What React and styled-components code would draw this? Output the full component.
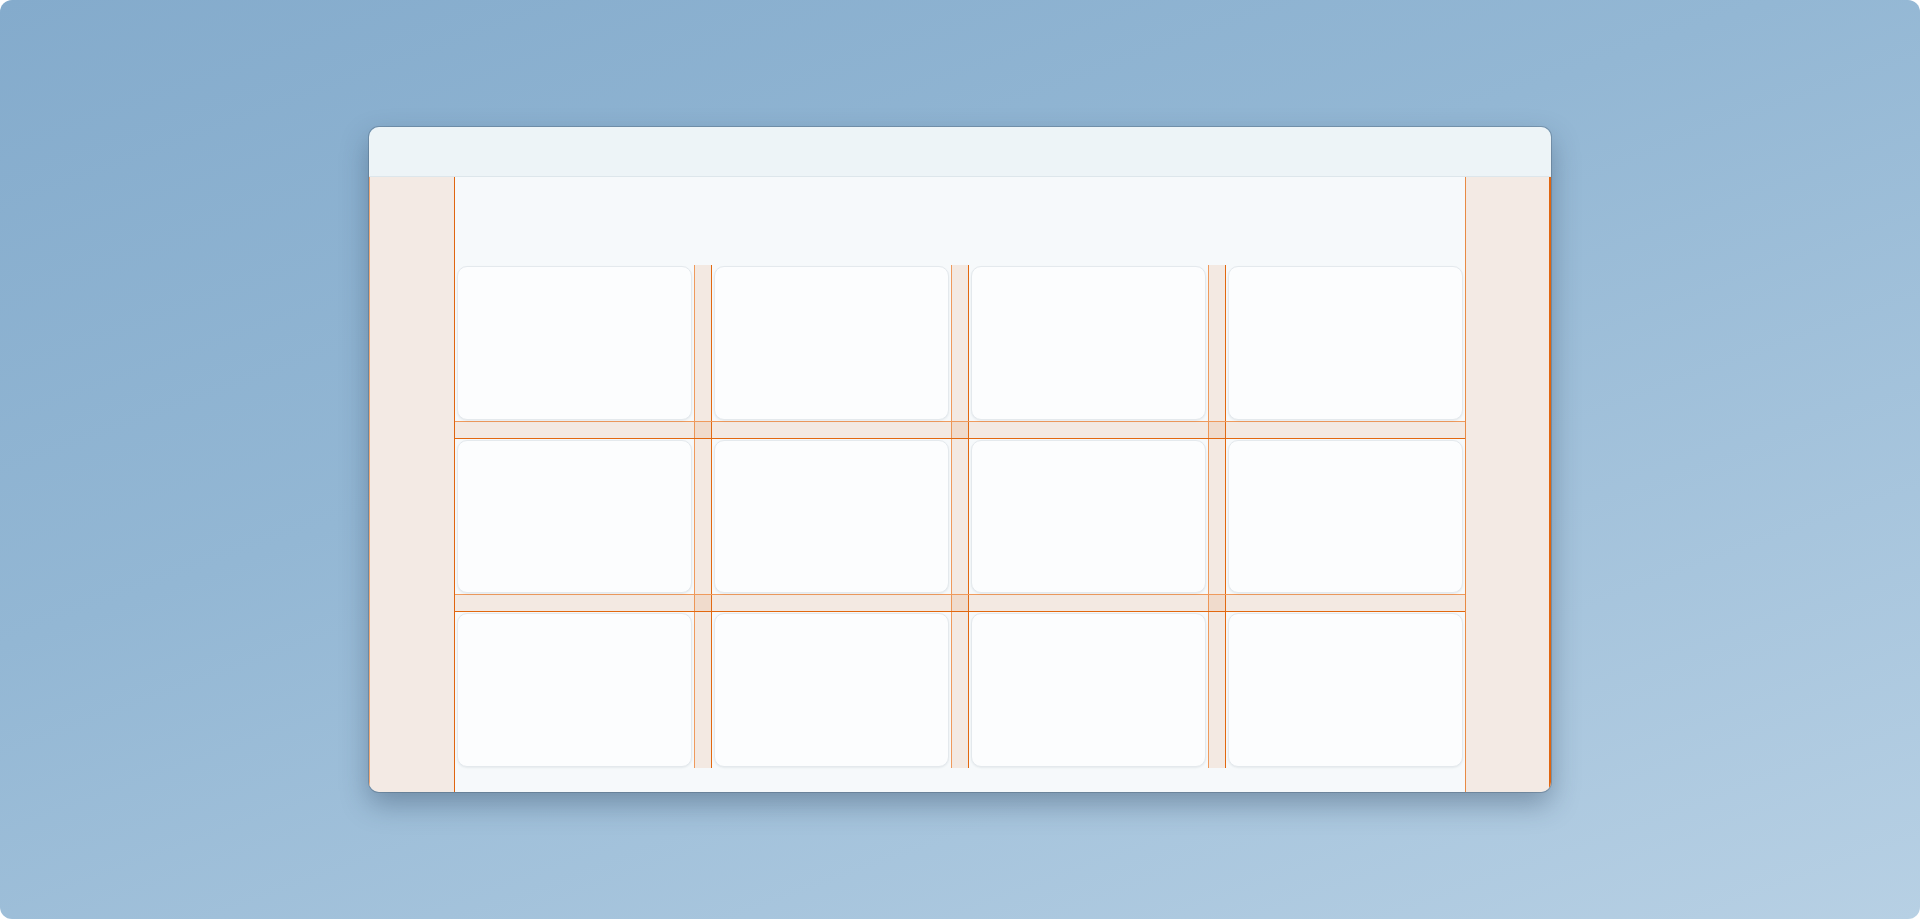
import React from "react";
import styled, { createGlobalStyle } from "styled-components";

const GlobalStyle = createGlobalStyle`
  html, body {
    margin: 0;
    padding: 0;
    background: #ffffff;
    font-family: "Inter", "Liberation Sans", sans-serif;
  }
  * {
    box-sizing: border-box;
  }
`;

const Screen = styled.div`
  width: 1920px;
  height: 919px;
  border-radius: 12px;
  background: linear-gradient(160deg, #84abcc 0%, #93b7d4 40%, #b7d0e4 100%);
  display: flex;
  align-items: center;
  justify-content: center;
`;

const Window = styled.div`
  width: 1182px;
  height: 665px;
  border-radius: 10px;
  overflow: hidden;
  display: flex;
  flex-direction: column;
  box-shadow: 0 0 0 1px rgba(70, 90, 110, 0.35), 0 12px 28px rgba(30, 50, 75, 0.35);
`;

const TitleBar = styled.div`
  height: 50px;
  flex-shrink: 0;
  background: #edf4f7;
  border-bottom: 1px solid #dde6eb;
`;

const Body = styled.div`
  flex: 1;
  display: grid;
  grid-template-columns: 86px 1fr 86px;
  min-height: 0;
`;

const Side = styled.div`
  background: #f3eae4;
  border-left: 1px solid ${(p) => (p.$right ? "#e88a44" : "#eea877")};
  border-right: ${(p) => (p.$right ? "2px solid #e0650f" : "1px solid #e0650f")};
`;

const Main = styled.div`
  background: #f6f9fb;
  padding: 88px 0 24px;
  display: flex;
  flex-direction: column;
`;

const Grid = styled.div`
  flex: 1;
  display: grid;
  grid-template-columns: 1fr 18px 1fr 18px 1fr 18px 1fr;
  grid-template-rows: 1fr 18px 1fr 18px 1fr;
`;

const ColGap = styled.div`
  grid-row: 1 / -1;
  grid-column: ${(p) => p.$col};
  background: rgba(226, 120, 50, 0.12);
  border-left: 1px solid #ef9a5c;
  border-right: 1px solid #e2680f;
`;

const RowGap = styled.div`
  grid-column: 1 / -1;
  grid-row: ${(p) => p.$row};
  background: rgba(226, 120, 50, 0.12);
  border-top: 1px solid #ef9a5c;
  border-bottom: 1px solid #e2680f;
`;

const Card = styled.div`
  grid-column: ${(p) => p.$col};
  grid-row: ${(p) => p.$row};
  margin: 1px 2px 1px 2px;
  background: #fcfdfe;
  border: 1px solid #e4e9ed;
  border-radius: 10px;
  box-shadow: 0 1px 2px rgba(40, 60, 80, 0.08);
`;

const rows = [1, 3, 5];
const cols = [1, 3, 5, 7];

export default function App() {
  return (
    <>
      <GlobalStyle />
      <Screen>
        <Window>
          <TitleBar />
          <Body>
            <Side />
            <Main>
              <Grid>
                {[2, 4, 6].map((c) => (
                  <ColGap key={"c" + c} $col={c} />
                ))}
                {[2, 4].map((r) => (
                  <RowGap key={"r" + r} $row={r} />
                ))}
                {rows.map((r) =>
                  cols.map((c) => <Card key={r + "-" + c} $row={r} $col={c} />)
                )}
              </Grid>
            </Main>
            <Side $right />
          </Body>
        </Window>
      </Screen>
    </>
  );
}
